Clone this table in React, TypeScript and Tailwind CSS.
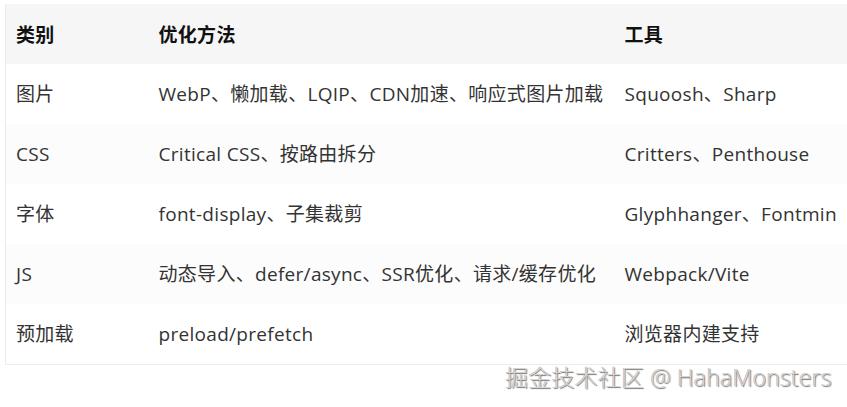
import React from "react";

const rows: [string, string, string][] = [
  ["图片", "WebP、懒加载、LQIP、CDN加速、响应式图片加载", "Squoosh、Sharp"],
  ["CSS", "Critical CSS、按路由拆分", "Critters、Penthouse"],
  ["字体", "font-display、子集裁剪", "Glyphhanger、Fontmin"],
  ["JS", "动态导入、defer/async、SSR优化、请求/缓存优化", "Webpack/Vite"],
  ["预加载", "preload/prefetch", "浏览器内建支持"],
];

export default function App() {
  return (
    <div
      className="w-[847px] h-[407px] bg-white overflow-hidden relative"
      style={{ fontFamily: '"Open Sans", "Noto Sans CJK SC", sans-serif' }}
    >
      <div className="pt-[4px] pl-[5px]">
        <table className="table-fixed w-[900px] border-collapse border-l border-b border-[#ececec] text-[19px] tracking-[0.3px] text-[#333]">
          <colgroup>
            <col className="w-[143px]" />
            <col className="w-[466px]" />
            <col />
          </colgroup>
          <thead>
            <tr className="bg-[#f6f6f6] h-[60px]">
              <th className="text-left font-bold text-[#111] pl-[10px] pt-[2px]">类别</th>
              <th className="text-left font-bold text-[#111] pl-[10px] pt-[2px]">优化方法</th>
              <th className="text-left font-bold text-[#111] pl-[10px] pt-[2px]">工具</th>
            </tr>
          </thead>
          <tbody>
            {rows.map((r, i) => (
              <tr key={i} className={`h-[60px] ${i % 2 === 1 ? "bg-[#fcfcfc]" : "bg-white"}`}>
                <td className="pl-[10px] pt-[1px] whitespace-nowrap">{r[0]}</td>
                <td className="pl-[10px] pt-[1px] whitespace-nowrap">{r[1]}</td>
                <td className="pl-[10px] pt-[1px] whitespace-nowrap">{r[2]}</td>
              </tr>
            ))}
          </tbody>
        </table>
      </div>
      <div
        className="absolute left-[505px] top-[366px] text-[23px] tracking-[0.2px] font-light text-[#d4d4d4] whitespace-nowrap leading-none"
        style={{ textShadow: "1px 1px 1px rgba(0,0,0,0.55), -0.5px -0.5px 0 rgba(0,0,0,0.25)" }}
      >
        掘金技术社区 @ HahaMonsters
      </div>
    </div>
  );
}
